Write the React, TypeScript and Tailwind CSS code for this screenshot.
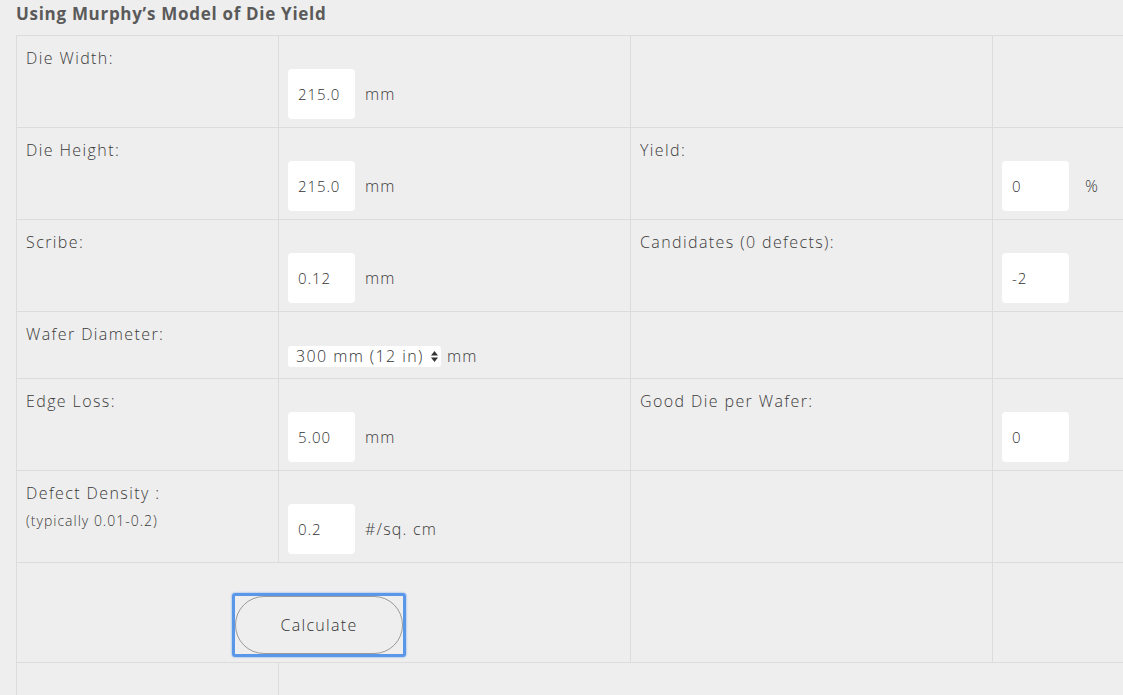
import React from "react";

const font = { fontFamily: '"Open Sans", "DejaVu Sans", sans-serif' };

function Box({ value }: { value: string }) {
  return (
    <input
      readOnly
      value={value}
      className="w-[67px] h-[50px] rounded-[4px] bg-white px-[10px] text-[15px] font-light tracking-[0.9px] text-[#333] outline-none align-middle"
    />
  );
}

function LabelCell({ text, sub }: { text: string; sub?: string }) {
  return (
    <td className="w-[262px] border border-[#dcdcdc] px-[9px] pt-[12px] align-top">
      <div className="text-[16px] font-light leading-[20px] tracking-[1.4px] text-[#3a3a3a]">{text}</div>
      {sub && (
        <div className="mt-[9px] text-[14px] font-light leading-[18px] tracking-[1px] text-[#3a3a3a]">{sub}</div>
      )}
    </td>
  );
}

function InputCell({ value, unit, w }: { value: string; unit: string; w: string }) {
  return (
    <td className={`${w} border border-[#dcdcdc] px-[9px] pt-[33px] pb-[8px] align-top`}>
      <div className="flex items-center">
        <Box value={value} />
        <span className="ml-[10px] text-[16px] font-light leading-[21px] tracking-[1.2px] text-[#3a3a3a]">{unit}</span>
      </div>
    </td>
  );
}

function Empty({ w }: { w: string }) {
  return <td className={`${w} border border-[#dcdcdc]`} />;
}

export default function App() {
  return (
    <div className="h-[695px] w-[1123px] overflow-hidden bg-[#eeeeee]" style={font}>
      <div className="pl-4 pt-[3px] pb-[10px] text-[17px] font-bold leading-[22px] tracking-[0.7px] text-[#5a5a5a]">
        Using Murphy&rsquo;s Model of Die Yield
      </div>
      <div className="pl-4">
        <table className="w-[1140px] table-fixed border-collapse">
          <tbody>
            <tr className="h-[92px]">
              <LabelCell text="Die Width:" />
              <InputCell value="215.0" unit="mm" w="w-[352px]" />
              <Empty w="w-[362px]" />
              <Empty w="w-[164px]" />
            </tr>
            <tr className="h-[92px]">
              <LabelCell text="Die Height:" />
              <InputCell value="215.0" unit="mm" w="w-[352px]" />
              <LabelCell text="Yield:" />
              <td className="border border-[#dcdcdc] px-[9px] pt-[33px] pb-[8px] align-top">
                <div className="flex items-center">
                  <Box value="0" />
                  <span className="ml-[16px] text-[16px] font-light leading-[21px] text-[#3a3a3a]">%</span>
                </div>
              </td>
            </tr>
            <tr className="h-[92px]">
              <LabelCell text="Scribe:" />
              <InputCell value="0.12" unit="mm" w="w-[352px]" />
              <LabelCell text="Candidates (0 defects):" />
              <InputCell value="-2" unit="" w="" />
            </tr>
            <tr className="h-[67px]">
              <LabelCell text="Wafer Diameter:" />
              <td className="border border-[#dcdcdc] px-[9px] pt-[34px] pb-[11px] align-top">
                <div className="flex h-[21px] items-center leading-[21px]">
                  <div className="flex h-[21px] w-[153px] items-center rounded-[3px] bg-white pl-[8px] pr-[2px] text-[16px] font-light tracking-[1.4px] text-[#333]">
                    <span>300 mm (12 in)</span>
                    <svg width="9" height="13" viewBox="0 0 9 13" className="ml-auto">
                      <path d="M4.5 1 L8 5.5 L1 5.5 Z" fill="#333" />
                      <path d="M4.5 12 L8 7.5 L1 7.5 Z" fill="#333" />
                    </svg>
                  </div>
                  <span className="ml-[6px] text-[16px] font-light tracking-[1.2px] text-[#3a3a3a]">mm</span>
                </div>
              </td>
              <Empty w="" />
              <Empty w="" />
            </tr>
            <tr className="h-[92px]">
              <LabelCell text="Edge Loss:" />
              <InputCell value="5.00" unit="mm" w="" />
              <LabelCell text="Good Die per Wafer:" />
              <InputCell value="0" unit="" w="" />
            </tr>
            <tr className="h-[92px]">
              <LabelCell text="Defect Density :" sub="(typically 0.01-0.2)" />
              <InputCell value="0.2" unit="#/sq. cm" w="" />
              <Empty w="" />
              <Empty w="" />
            </tr>
            <tr className="h-[100px]">
              <td colSpan={2} className="border border-[#dcdcdc] pt-[30px] pb-[4px] pl-[215px] align-top">
                <div className="inline-block rounded-[3px] border-[3px] border-[#5b97e8] shadow-[0_0_2px_#5b97e8]">
                  <button className="block h-[58px] w-[168px] rounded-full border border-[#9a9a9a] bg-[#eeeeee] text-[16px] font-light tracking-[1.3px] text-[#333]">
                    Calculate
                  </button>
                </div>
              </td>
              <Empty w="" />
              <Empty w="" />
            </tr>
            <tr className="h-[92px]">
              <td className="border border-[#dcdcdc]" />
              <td colSpan={3} className="border border-[#dcdcdc]" />
            </tr>
          </tbody>
        </table>
      </div>
    </div>
  );
}
